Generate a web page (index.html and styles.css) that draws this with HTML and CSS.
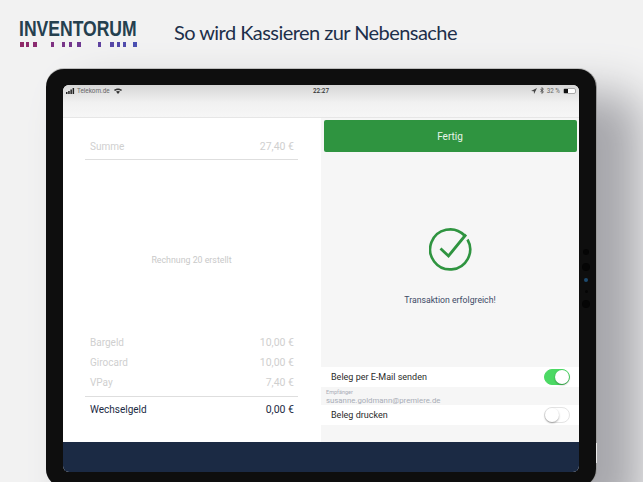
FILE: index.html
```html
<!DOCTYPE html>
<html lang="de">
<head>
    <meta charset="UTF-8">
    <title>Inventorum</title>
    <link rel="stylesheet" href="styles.css">
</head>
<body>
    <header class="top">
        <div class="logo">
            <div class="logoName">INVENTORUM</div>
            <svg class="logoBars" width="118" height="5" viewBox="0 0 118 5">
                <rect x="1" width="4" height="5" fill="#8f2a68"/>
                <rect x="7" width="3" height="5" fill="#8d2b6c"/>
                <rect x="14" width="4" height="5" fill="#8b2c70"/>
                <rect x="32" width="3" height="5" fill="#7f3182"/>
                <rect x="43" width="3" height="5" fill="#783588"/>
                <rect x="50" width="3" height="5" fill="#74378c"/>
                <rect x="58" width="4" height="5" fill="#6f3a92"/>
                <rect x="79" width="3" height="5" fill="#5f43a0"/>
                <rect x="91" width="4" height="5" fill="#5747a6"/>
                <rect x="98" width="3" height="5" fill="#5349aa"/>
                <rect x="104" width="3" height="5" fill="#504bac"/>
                <rect x="114" width="4" height="5" fill="#4a4fb2"/>
            </svg>
        </div>
        <h1 class="claim">So wird Kassieren zur Nebensache</h1>
    </header>

    <div class="tablet">
        <div class="sensors">
            <span class="dot"></span>
            <span class="dot big"></span>
            <span class="dot lens"></span>
            <span class="dot tiny"></span>
            <span class="dot big"></span>
        </div>
        <span class="sideBtn"></span>

        <div class="screen">
            <div class="navBar">
                <div class="status">
                    <div class="statusLeft">
                        <svg width="10" height="6" viewBox="0 0 10 6" fill="#222">
                            <rect x="0" y="4" width="1.5" height="2"/>
                            <rect x="2.2" y="3" width="1.5" height="3"/>
                            <rect x="4.4" y="1.5" width="1.5" height="4.5"/>
                            <rect x="6.6" y="0" width="1.5" height="6"/>
                        </svg>
                        <span>Telekom.de</span>
                        <svg class="wifi" width="8" height="6" viewBox="0 0 8 6" fill="#333">
                            <path d="M0 2 C2 0 6 0 8 2 L7 3 C5.2 1.6 2.8 1.6 1 3 Z"/>
                            <path d="M2 3.6 C3.2 2.7 4.8 2.7 6 3.6 L4 6 Z"/>
                        </svg>
                    </div>
                    <div class="statusTime">22:27</div>
                    <div class="statusRight">
                        <svg width="6" height="6" viewBox="0 0 6 6" fill="#444"><path d="M6 0 L0 3 L2.8 3.2 L3 6 Z"/></svg>
                        <svg width="4" height="7" viewBox="0 0 4 7" fill="none" stroke="#444" stroke-width="0.8"><path d="M0.3 1.8 L3.4 4.9 L2 6.4 L2 0.6 L3.4 2.1 L0.3 5.2"/></svg>
                        <span>32 %</span>
                        <span class="battery"><span class="batteryFill"></span></span>
                    </div>
                </div>
            </div>

            <div class="content">
                <section class="receipt">
                    <div class="sumRow">
                        <span>Summe</span>
                        <span class="amount">27,40 €</span>
                    </div>
                    <div class="receiptNote">Rechnung 20 erstellt</div>
                    <ul class="payments">
                        <li><span>Bargeld</span><span class="amount">10,00 €</span></li>
                        <li><span>Girocard</span><span class="amount">10,00 €</span></li>
                        <li><span>VPay</span><span class="amount">7,40 €</span></li>
                    </ul>
                    <div class="changeRow">
                        <span>Wechselgeld</span>
                        <span class="amount">0,00 €</span>
                    </div>
                </section>

                <section class="done">
                    <button class="doneBtn">Fertig</button>
                    <div class="success">
                        <svg class="successIcon" width="44" height="44" viewBox="0 0 44 44" fill="none" stroke="#2f9440" stroke-width="2.6">
                            <path d="M35.5 8.5 A20 20 0 1 0 38.5 12.5"/>
                            <path d="M11.5 21.5 L19.5 29 L37 7.5" stroke-width="2.8"/>
                        </svg>
                        <p class="successText">Transaktion erfolgreich!</p>
                    </div>
                    <div class="optionRow">
                        <span>Beleg per E-Mail senden</span>
                        <span class="toggle on"><span class="knob"></span></span>
                    </div>
                    <div class="recipient">
                        <div class="recipientLabel">Empfänger</div>
                        <div class="recipientMail">susanne.goldmann@premiere.de</div>
                    </div>
                    <div class="optionRow">
                        <span>Beleg drucken</span>
                        <span class="toggle"><span class="knob"></span></span>
                    </div>
                    <div class="doneEnd"></div>
                </section>
            </div>

            <div class="footerBar"></div>
        </div>
    </div>
</body>
</html>
```

FILE: styles.css
```css
body {
    margin: 0;
    width: 643px;
    height: 482px;
    overflow: hidden;
    background-color: #f2f2f2;
    font-family: Roboto, "Liberation Sans", sans-serif;
    color: #1b2a44;
}

/* Header */
.top {
    display: flex;
    align-items: flex-start;
    height: 69px;
    padding-left: 19px;
}

.logo {
    width: 118px;
    padding-top: 16px;
}

.logoName {
    font-family: "Liberation Sans", sans-serif;
    font-weight: bold;
    font-size: 22.5px;
    line-height: 25px;
    color: #25404f;
    white-space: nowrap;
    transform: scaleX(0.78);
    transform-origin: left center;
}

.logoBars {
    display: block;
    margin-top: 1px;
}

.claim {
    margin: 18px 0 0 37px;
    font-family: Lato, sans-serif;
    font-weight: 400;
    font-size: 20px;
    letter-spacing: -0.55px;
    line-height: 28px;
    color: #1d2f4a;
    white-space: nowrap;
}

/* Tablet */
.tablet {
    position: relative;
    box-sizing: border-box;
    width: 550px;
    height: 418px;
    margin-left: 46px;
    padding: 16px 17px;
    background-color: #0e0e0e;
    border-radius: 18px;
    box-shadow: 0 -1px 0 #bdbdbd, 1px 0 0 #9a9a9a, 38px 30px 46px 6px #a6a6ab;
}

.sensors {
    position: absolute;
    top: 180px;
    right: 4px;
    width: 12px;
    display: flex;
    flex-direction: column;
    align-items: center;
    gap: 7.5px;
}

.dot {
    width: 6px;
    height: 6px;
    border-radius: 50%;
    background-color: #050505;
}

.dot.big {
    width: 8px;
    height: 8px;
}

.dot.lens {
    width: 4px;
    height: 4px;
    background-color: #1d4a6e;
}

.dot.tiny {
    width: 3px;
    height: 3px;
}

.sideBtn {
    position: absolute;
    top: 374px;
    right: -1px;
    width: 1px;
    height: 20px;
    background-color: #e8e8e8;
}

.screen {
    display: flex;
    flex-direction: column;
    width: 516px;
    height: 387px;
    overflow: hidden;
    border-radius: 6px;
    background-color: #fff;
}

/* Status and nav bar */
.navBar {
    height: 32px;
    flex-shrink: 0;
    border-bottom: 1px solid #e6e6e6;
    background: linear-gradient(#d6d6d6, #f1f1f1 55%, #f6f6f6);
}

.status {
    display: grid;
    grid-template-columns: 1fr auto 1fr;
    align-items: center;
    height: 11px;
    padding: 0 3px;
    font-size: 6.3px;
    color: #666;
}

.statusLeft, .statusRight {
    display: flex;
    align-items: center;
    gap: 1px;
}

.statusLeft .wifi {
    margin-left: 3px;
}

.statusTime {
    font-weight: 500;
    color: #333;
}

.statusRight {
    justify-content: flex-end;
    gap: 3px;
}

.battery {
    display: block;
    box-sizing: border-box;
    width: 13px;
    height: 6px;
    border: 1px solid #aaa;
    border-radius: 2px;
    background-color: #fff;
}

.batteryFill {
    display: block;
    width: 4px;
    height: 4px;
    background-color: #111;
}

/* Two columns */
.content {
    display: grid;
    grid-template-columns: 258px 258px;
    flex: 1;
    min-height: 0;
}

/* Receipt side */
.receipt {
    display: flex;
    flex-direction: column;
    padding: 0 23px 0 22px;
    font-size: 10px;
    color: #cfcfcf;
}

.amount {
    font-size: 10.5px;
}

.sumRow {
    display: flex;
    justify-content: space-between;
    align-items: center;
    height: 41px;
    padding: 0 4px 0 5px;
    border-bottom: 1px solid #dedede;
}

.sumRow span {
    padding-top: 15px;
}

.receiptNote {
    flex: 1;
    display: flex;
    align-items: center;
    justify-content: center;
    padding-top: 28px;
    font-size: 8.8px;
    color: #c9c9c9;
}

.payments {
    list-style: none;
    margin: 0;
    padding: 0 4px 3px 5px;
}

.payments li {
    display: flex;
    justify-content: space-between;
    align-items: center;
    height: 20.4px;
}

.changeRow {
    display: flex;
    justify-content: space-between;
    align-items: center;
    height: 25px;
    margin-bottom: 20px;
    padding: 0 4px 0 5px;
    border-top: 1px solid #dedede;
    color: #1b2a44;
}

/* Right side */
.done {
    display: flex;
    flex-direction: column;
    background-color: #f6f6f6;
    font-size: 9px;
}

.doneBtn {
    height: 32px;
    flex-shrink: 0;
    margin: 2px 2.5px 0;
    border: none;
    border-radius: 2px;
    background-color: #2f9440;
    color: #e8f5ea;
    font-family: inherit;
    font-size: 10px;
}

.success {
    flex: 1;
    display: flex;
    flex-direction: column;
    align-items: center;
    padding-top: 75px;
}

.successIcon {
    margin-left: 2px;
}

.successText {
    margin: 24px 0 0;
    font-size: 8.7px;
    color: #3d4a66;
}

.optionRow {
    display: flex;
    justify-content: space-between;
    align-items: center;
    height: 20px;
    padding: 0 9px 0 10px;
    background-color: #fff;
    color: #2a2a2a;
}

.recipient {
    box-sizing: border-box;
    height: 18px;
    padding: 1px 0 0 5px;
    color: #a9adb6;
    line-height: 8.5px;
}

.recipientLabel {
    font-size: 5.5px;
}

.recipientMail {
    font-size: 7.8px;
}

.doneEnd {
    height: 17px;
}

/* Toggles */
.toggle {
    display: flex;
    box-sizing: border-box;
    width: 26px;
    height: 16px;
    border: 1px solid #e4e4e4;
    border-radius: 8px;
    background-color: #fff;
}

.toggle.on {
    justify-content: flex-end;
    border-color: #4cd964;
    background-color: #4cd964;
}

.knob {
    width: 14px;
    height: 14px;
    border-radius: 50%;
    background-color: #fff;
    box-shadow: 0 1px 2px rgba(0, 0, 0, 0.35);
}

.footerBar {
    height: 30px;
    flex-shrink: 0;
    background-color: #1b2a44;
}
```
